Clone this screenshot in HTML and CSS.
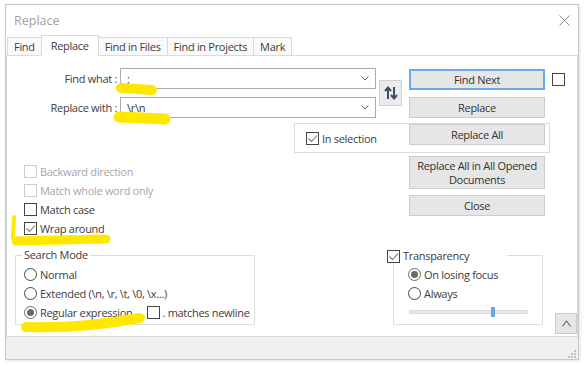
FILE: index.html
```html
<!DOCTYPE html>
<html lang="en">
<head>
    <meta charset="UTF-8">
    <title>Replace</title>
    <link rel="stylesheet" href="styles.css">
</head>
<body>
    <div class="window">
        <div class="titlebar">
            <span class="title">Replace</span>
            <svg class="close-x" width="11" height="11" viewBox="0 0 11 11"><path d="M0.5 0.5 L10.5 10.5 M10.5 0.5 L0.5 10.5" stroke="#8a8a8a" stroke-width="1" fill="none"/></svg>
        </div>

        <div class="tabs">
            <div class="tab">Find</div>
            <div class="tab active">Replace</div>
            <div class="tab">Find in Files</div>
            <div class="tab">Find in Projects</div>
            <div class="tab">Mark</div>
        </div>

        <div class="panel">
            <div class="top">
                <label class="field-label row1">Find what :</label>
                <div class="combo row1">
                    <span class="combo-text">;</span>
                    <svg class="chevron" width="8" height="5" viewBox="0 0 8 5"><path d="M0.5 0.5 L4 4 L7.5 0.5" stroke="#606060" fill="none"/></svg>
                </div>
                <button class="swap">
                    <svg width="14" height="14" viewBox="0 0 14 14"><path d="M4 13 V2 M1 5 L4 1.5 L7 5 M10 1 V12 M7 9 L10 12.5 L13 9" stroke="#3f4d66" stroke-width="2" fill="none"/></svg>
                </button>
                <button class="btn focused row1">Find Next</button>
                <span class="box find-opt"></span>

                <label class="field-label row2">Replace with :</label>
                <div class="combo row2">
                    <span class="combo-text">\r\n</span>
                    <svg class="chevron" width="8" height="5" viewBox="0 0 8 5"><path d="M0.5 0.5 L4 4 L7.5 0.5" stroke="#606060" fill="none"/></svg>
                </div>
                <button class="btn row2">Replace</button>

                <div class="selection">
                    <span class="check">
                        <span class="box"><svg width="11" height="11" viewBox="0 0 11 11"><path d="M1.5 5.5 L4.5 8.5 L10 2.5" stroke="#777" stroke-width="1.1" fill="none"/></svg></span>
                        In selection
                    </span>
                    <button class="btn">Replace All</button>
                </div>

                <button class="btn tall">Replace All in All Opened<br>Documents</button>
                <button class="btn close-btn">Close</button>

                <div class="options">
                    <span class="check disabled"><span class="box"></span>Backward direction</span>
                    <span class="check disabled"><span class="box"></span>Match whole word only</span>
                    <span class="check"><span class="box"></span>Match case</span>
                    <span class="check">
                        <span class="box"><svg width="11" height="11" viewBox="0 0 11 11"><path d="M1.5 5.5 L4.5 8.5 L10 2.5" stroke="#777" stroke-width="1.1" fill="none"/></svg></span>
                        Wrap around
                    </span>
                </div>
            </div>

            <div class="bottom">
                <fieldset class="group search-mode">
                    <legend>Search Mode</legend>
                    <span class="radio-row"><span class="radio"></span>Normal</span>
                    <span class="radio-row"><span class="radio"></span>Extended (\n, \r, \t, \0, \x...)</span>
                    <span class="radio-row">
                        <span class="radio checked"></span>Regular expression
                        <span class="check newline"><span class="box"></span>. matches newline</span>
                    </span>
                </fieldset>

                <fieldset class="group transparency">
                    <legend>
                        <span class="check">
                            <span class="box"><svg width="11" height="11" viewBox="0 0 11 11"><path d="M1.5 5.5 L4.5 8.5 L10 2.5" stroke="#777" stroke-width="1.1" fill="none"/></svg></span>
                            Transparency
                        </span>
                    </legend>
                    <span class="radio-row"><span class="radio checked"></span>On losing focus</span>
                    <span class="radio-row"><span class="radio"></span>Always</span>
                    <div class="slider"><span class="thumb"></span></div>
                </fieldset>

                <button class="collapse">
                    <svg width="9" height="7" viewBox="0 0 9 7"><path d="M0.5 6.5 L4.5 0.8 L8.5 6.5" stroke="#3f4d66" stroke-width="1" fill="none"/></svg>
                </button>
            </div>
        </div>

        <div class="status">
            <svg width="9" height="8" viewBox="0 0 9 8"><path d="M6 0h2v2h-2z M3 3h2v2h-2z M6 3h2v2h-2z M0 6h2v2h-2z M3 6h2v2h-2z M6 6h2v2h-2z" fill="#c2c2c2"/></svg>
        </div>
    </div>

    <!-- hand drawn highlighter marks -->
    <svg class="marks" width="585" height="366" viewBox="0 0 585 366">
        <g stroke="#ffe800" fill="none" stroke-linecap="round">
            <path d="M121 88 L152 90" stroke-width="10"/>
            <path d="M119 117 L165 119" stroke-width="11"/>
            <path d="M14 217 L13 238" stroke-width="4"/>
            <path d="M16 241 L106 239" stroke-width="9"/>
            <path d="M26 327 Q80 329 140 318" stroke-width="10"/>
        </g>
    </svg>
</body>
</html>
```

FILE: styles.css
```css
body {
    margin: 0;
    width: 585px;
    height: 366px;
    overflow: hidden;
    background: #fff;
    font-family: "Open Sans", "Noto Sans", sans-serif;
    font-size: 11px;
    letter-spacing: -0.3px;
    color: #3c3c3c;
    position: relative;
}
.window {
    margin: 4px 0 0 5px;
    width: 574px;
    height: 356px;
    box-sizing: border-box;
    border: 1px solid #c8c8c8;
    box-shadow: 1px 1px 3px rgba(0, 0, 0, 0.12);
    display: flex;
    flex-direction: column;
    background: #fff;
}
.titlebar {
    height: 30px;
    flex: none;
    display: flex;
    align-items: center;
    justify-content: space-between;
    padding: 0 8px 0 8px;
}
.title {
    font-size: 12.5px;
    color: #a0a0a0;
    letter-spacing: 0;
}
.tabs {
    height: 20px;
    flex: none;
    display: flex;
    align-items: flex-end;
    padding-left: 1px;
}
.tab {
    height: 18px;
    line-height: 18px;
    padding: 0 6px;
    border: 1px solid #dadada;
    border-bottom: none;
    box-sizing: border-box;
    margin-right: -1px;
    background: #fafafa;
}
.tab.active {
    height: 21px;
    line-height: 19px;
    background: #fff;
    position: relative;
    margin-bottom: -1px;
    z-index: 1;
    padding: 0 9px;
}
.panel {
    flex: 1;
    border: 1px solid #dadada;
    background: #fff;
}
.status {
    height: 21px;
    flex: none;
    background: #f0f0f0;
    display: flex;
    justify-content: flex-end;
    align-items: flex-end;
    padding: 0 1px 1px 0;
}

/* upper part: fields and action buttons */
.top {
    display: grid;
    grid-template-columns: 113px 256px 33px 136px 1fr;
    grid-template-rows: 29px 26px 33px 39px auto;
    padding-top: 12px;
}
.row1 { grid-row: 1; }
.row2 { grid-row: 2; }
.field-label {
    grid-column: 1;
    text-align: right;
    line-height: 21px;
    padding-right: 3px;
    height: 21px;
}
.combo {
    grid-column: 2;
    height: 21px;
    box-sizing: border-box;
    border: 1px solid #ababab;
    display: flex;
    align-items: center;
    justify-content: space-between;
    padding: 0 6px 0 6px;
}
.combo-text {
    color: #333;
}
.swap {
    grid-column: 3;
    grid-row: 1 / 3;
    margin: 12px 0 0 3px;
    width: 23px;
    height: 26px;
    padding: 0;
    border: 1px solid #cfcfcf;
    background: #ebebeb;
    display: flex;
    align-items: center;
    justify-content: center;
}
.btn {
    grid-column: 4;
    height: 21px;
    box-sizing: border-box;
    border: 1px solid #cccccc;
    background: #e6e6e6;
    font: inherit;
    letter-spacing: inherit;
    color: #333;
    padding: 0;
    align-self: start;
}
.btn.focused {
    border: 2px solid #6aaae6;
    margin-top: 1px;
}
.find-opt {
    grid-column: 5;
    grid-row: 1;
    margin: 5px 0 0 7px;
}
.selection {
    grid-column: 2 / 5;
    grid-row: 3;
    margin: 0 -5px 0 174px;
    height: 30px;
    box-sizing: border-box;
    border: 1px solid #dddddd;
    display: flex;
    align-items: center;
    justify-content: space-between;
    padding: 0 4px 0 11px;
}
.selection .btn {
    width: 136px;
}
.btn.tall {
    grid-row: 4;
    height: 33px;
    line-height: 14px;
}
.close-btn {
    grid-row: 5;
}
.options {
    grid-column: 1 / 3;
    grid-row: 4 / 6;
    margin-top: 6px;
    padding-left: 17px;
    display: flex;
    flex-direction: column;
}
.check {
    display: flex;
    align-items: center;
    gap: 3px;
    height: 19px;
}
.check.disabled {
    color: #a6a6a6;
}
.box {
    width: 13px;
    height: 13px;
    box-sizing: border-box;
    border: 1px solid #444;
    background: #fff;
    display: flex;
    align-items: center;
    justify-content: center;
    flex: none;
}
.disabled .box {
    border-color: #cccccc;
}
.box svg {
    display: block;
}

/* lower part: group boxes */
.bottom {
    display: flex;
    align-items: flex-start;
    margin-top: 10px;
    padding-left: 8px;
}
.group {
    margin: 0;
    padding: 3px 0 0 0;
    border: 1px solid #dddddd;
    min-width: 0;
    height: 77px;
    box-sizing: border-box;
    display: flex;
    flex-direction: column;
}
.group legend {
    padding: 0 2px;
    line-height: 14px;
    height: 14px;
}
.search-mode {
    width: 240px;
}
.search-mode legend {
    margin-left: 6px;
}
.search-mode .radio-row {
    padding-left: 8px;
}
.radio-row {
    display: flex;
    align-items: center;
    gap: 3px;
    height: 19px;
    white-space: nowrap;
}
.radio {
    width: 13px;
    height: 13px;
    box-sizing: border-box;
    border: 1px solid #444;
    border-radius: 50%;
    display: flex;
    align-items: center;
    justify-content: center;
    flex: none;
}
.radio.checked {
    border-color: #6a6a6a;
}
.radio.checked::after {
    content: "";
    width: 7px;
    height: 7px;
    border-radius: 50%;
    background: #6a6a6a;
}
.check.newline {
    margin-left: 11px;
}
.transparency {
    width: 150px;
    margin-left: 138px;
}
.transparency legend {
    margin-left: -7px;
    padding: 0;
    width: 120px;
    background: #fff;
}
.transparency legend .check {
    height: 14px;
    margin-top: 1px;
}
.transparency .radio-row {
    padding-left: 14px;
}
.slider {
    margin: 7px 0 0 15px;
    width: 119px;
    height: 4px;
    box-sizing: border-box;
    background: #e7e7e7;
    border: 1px solid #dcdcdc;
    position: relative;
}
.thumb {
    position: absolute;
    left: 81px;
    top: -4px;
    width: 4px;
    height: 10px;
    background: #66a8e6;
}
.collapse {
    margin: 65px 0 0 auto;
    width: 22px;
    height: 21px;
    padding: 0;
    border: 1px solid #cccccc;
    background: #e6e6e6;
    display: flex;
    align-items: center;
    justify-content: center;
}
.marks {
    position: absolute;
    left: 0;
    top: 0;
    pointer-events: none;
}
```
